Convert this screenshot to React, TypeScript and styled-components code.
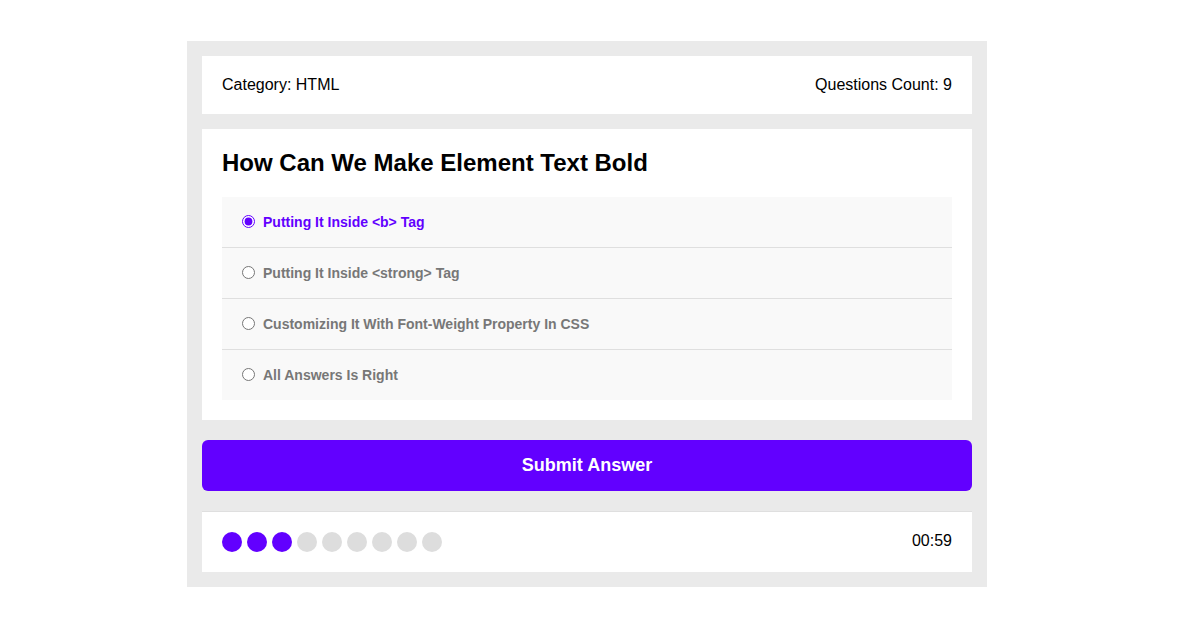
import React from "react";
import styled, { createGlobalStyle } from "styled-components";

const Global = createGlobalStyle`
  * { box-sizing: border-box; }
  body {
    margin: 0;
    background: #ffffff;
    font-family: "Liberation Sans", Arial, Helvetica, sans-serif;
  }
`;

const ACCENT = "#6200ff";

const Page = styled.div`
  padding: 41px 0 0 187px;
`;

const QuizApp = styled.div`
  width: 800px;
  background-color: #eaeaea;
  padding: 15px;
`;

const Info = styled.div`
  display: flex;
  background-color: #fff;
  padding: 20px;
  font-size: 16px;
  color: #000;
`;

const InfoItem = styled.div<{ $align?: "left" | "right" }>`
  flex: 1;
  text-align: ${(p) => p.$align ?? "left"};
`;

const QuizArea = styled.div`
  background-color: #fff;
  padding: 20px;
  margin-top: 15px;
`;

const Title = styled.h2`
  margin: 0;
  font-size: 24px;
  font-weight: bold;
  color: #000;
`;

const AnswersArea = styled.div`
  background-color: #fff;
  padding: 0 20px 20px;
`;

const Answer = styled.div`
  background-color: #f9f9f9;
  padding: 15px;
  &:not(:last-child) {
    border-bottom: 1px solid #dfdfdf;
  }
`;

const Radio = styled.input`
  accent-color: ${ACCENT};
  margin: 3px 3px 0 5px;
`;

const Label = styled.label<{ $checked?: boolean }>`
  cursor: pointer;
  font-weight: bold;
  color: ${(p) => (p.$checked ? ACCENT : "#777")};
  font-size: 14px;
  margin-left: 5px;
  position: relative;
  top: -1px;
`;

const SubmitButton = styled.button`
  background-color: ${ACCENT};
  display: block;
  width: 100%;
  padding: 15px;
  border: none;
  color: #fff;
  font-family: "Liberation Sans", Arial, sans-serif;
  font-size: 18px;
  font-weight: bold;
  border-radius: 6px;
  cursor: pointer;
  margin: 20px auto;
`;

const Bullets = styled.div`
  border-top: 1px solid #dfdfdf;
  background-color: #fff;
  display: flex;
  padding: 20px;
`;

const Spans = styled.div`
  flex: 1;
  display: flex;
`;

const Dot = styled.span<{ $on?: boolean }>`
  width: 20px;
  height: 20px;
  background-color: ${(p) => (p.$on ? ACCENT : "#ddd")};
  margin-right: 5px;
  border-radius: 50%;
`;

const Countdown = styled.div`
  font-size: 16px;
  color: #000;
`;

const answers = [
  "Putting It Inside <b> Tag",
  "Putting It Inside <strong> Tag",
  "Customizing It With Font-Weight Property In CSS",
  "All Answers Is Right",
];

export default function App() {
  const [selected, setSelected] = React.useState(0);
  return (
    <>
      <Global />
      <Page>
        <QuizApp>
          <Info>
            <InfoItem>Category: HTML</InfoItem>
            <InfoItem $align="right">Questions Count: 9</InfoItem>
          </Info>
          <QuizArea>
            <Title>How Can We Make Element Text Bold</Title>
          </QuizArea>
          <AnswersArea>
            {answers.map((a, i) => (
              <Answer key={i}>
                <Radio
                  type="radio"
                  name="question"
                  id={`answer_${i}`}
                  checked={selected === i}
                  onChange={() => setSelected(i)}
                />
                <Label htmlFor={`answer_${i}`} $checked={selected === i}>
                  {a}
                </Label>
              </Answer>
            ))}
          </AnswersArea>
          <SubmitButton>Submit Answer</SubmitButton>
          <Bullets>
            <Spans>
              {Array.from({ length: 9 }).map((_, i) => (
                <Dot key={i} $on={i < 3} />
              ))}
            </Spans>
            <Countdown>00:59</Countdown>
          </Bullets>
        </QuizApp>
      </Page>
    </>
  );
}
